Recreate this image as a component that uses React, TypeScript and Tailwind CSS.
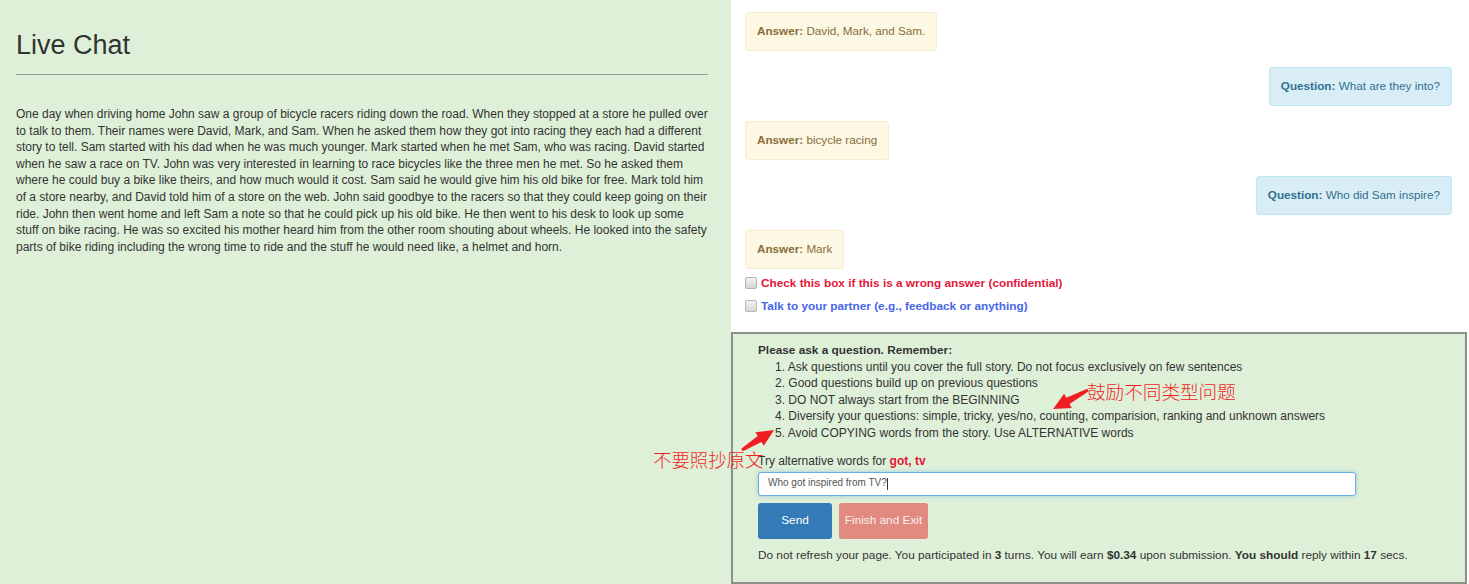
import React from "react";

const story =
  "One day when driving home John saw a group of bicycle racers riding down the road. When they stopped at a store he pulled over to talk to them. Their names were David, Mark, and Sam. When he asked them how they got into racing they each had a different story to tell. Sam started with his dad when he was much younger. Mark started when he met Sam, who was racing. David started when he saw a race on TV. John was very interested in learning to race bicycles like the three men he met. So he asked them where he could buy a bike like theirs, and how much would it cost. Sam said he would give him his old bike for free. Mark told him of a store nearby, and David told him of a store on the web. John said goodbye to the racers so that they could keep going on their ride. John then went home and left Sam a note so that he could pick up his old bike. He then went to his desk to look up some stuff on bike racing. He was so excited his mother heard him from the other room shouting about wheels. He looked into the safety parts of bike riding including the wrong time to ride and the stuff he would need like, a helmet and horn.";

const messages = [
  { kind: "answer", text: "David, Mark, and Sam." },
  { kind: "question", text: "What are they into?" },
  { kind: "answer", text: "bicycle racing" },
  { kind: "question", text: "Who did Sam inspire?" },
  { kind: "answer", text: "Mark" },
];

const rules = [
  "Ask questions until you cover the full story. Do not focus exclusively on few sentences",
  "Good questions build up on previous questions",
  "DO NOT always start from the BEGINNING",
  "Diversify your questions: simple, tricky, yes/no, counting, comparision, ranking and unknown answers",
  "Avoid COPYING words from the story. Use ALTERNATIVE words",
];

function Bubble({ kind, text }: { kind: string; text: string }) {
  if (kind === "question") {
    return (
      <div className="self-end h-[39px] flex items-center px-[11px] rounded-[3px] border border-[#bce8f1] bg-[#d9edf7] text-[#31708f] text-[11.7px]">
        <span>
          <b>Question:</b> {text}
        </span>
      </div>
    );
  }
  return (
    <div className="self-start h-[39px] flex items-center px-[11px] rounded-[3px] border border-[#faebcc] bg-[#fcf8e3] text-[#8a6d3b] text-[11.7px]">
      <span>
        <b>Answer:</b> {text}
      </span>
    </div>
  );
}

function CheckBox() {
  return (
    <span className="inline-block w-[12px] h-[12px] mr-[4px] rounded-[2px] border border-[#b4b4b4] bg-gradient-to-b from-[#f4f4f4] to-[#d6d6d6]" />
  );
}

// red hand-drawn style arrow, tail -> tip in page coords
function Arrow({ tx, ty, px, py }: { tx: number; ty: number; px: number; py: number }) {
  const dx = px - tx;
  const dy = py - ty;
  const len = Math.hypot(dx, dy);
  const ux = dx / len;
  const uy = dy / len;
  const nx = -uy;
  const ny = ux;
  const bx = px - ux * 17;
  const by = py - uy * 17;
  const pts = [
    [tx + nx * 1.5, ty + ny * 1.5],
    [bx + nx * 3.5, by + ny * 3.5],
    [bx + nx * 8, by + ny * 8],
    [px, py],
    [bx - nx * 8, by - ny * 8],
    [bx - nx * 3.5, by - ny * 3.5],
    [tx - nx * 1.5, ty - ny * 1.5],
  ]
    .map((p) => p.join(","))
    .join(" ");
  return <polygon points={pts} fill="#f01e23" />;
}

export default function App() {
  return (
    <div className="relative flex w-[1469px] h-[584px] overflow-hidden font-['Liberation_Sans',Arial,sans-serif] text-[12px] leading-[16.6px] text-[#333]">
      {/* story column */}
      <div className="w-[731px] shrink-0 bg-[#dff0d8] px-4">
        <h2 className="pt-[30px] text-[27px] leading-[30px] text-[#333]">Live Chat</h2>
        <hr className="mt-[14px] w-[692px] border-t border-[#9a9e9a]" />
        <p className="mt-[31px] w-[692px]">{story}</p>
      </div>

      {/* chat column */}
      <div className="flex-1 flex flex-col bg-white">
        <div className="flex-1 pl-[14px] pr-[17px] pt-[12px]">
          <div className="flex flex-col gap-[15.5px]">
            {messages.map((m, i) => (
              <Bubble key={i} kind={m.kind} text={m.text} />
            ))}
          </div>
          <div className="mt-[6px] flex flex-col gap-[6px] font-bold text-[11.8px]">
            <div className="flex items-center">
              <CheckBox />
              <span className="text-[#e3173a]">Check this box if this is a wrong answer (confidential)</span>
            </div>
            <div className="flex items-center">
              <CheckBox />
              <span className="text-[#4866e8]">Talk to your partner (e.g., feedback or anything)</span>
            </div>
          </div>
        </div>

        <div className="h-[252px] mr-[2px] border-2 border-[#8b908b] bg-[#dff0d8] pl-[25px] pt-[8px]">
          <div className="font-bold text-[11.8px]">Please ask a question. Remember:</div>
          <div className="pl-[17px]">
            {rules.map((r, i) => (
              <div key={i}>
                {i + 1}. {r}
              </div>
            ))}
          </div>
          <div className="mt-[11.5px]">
            Try alternative words for <b className="text-[#e3173a]">got, tv</b>
          </div>
          <div className="mt-[2px] w-[598px] h-[24px] flex items-center pl-[9px] rounded-[3px] border border-[#66afe9] bg-white shadow-[0_0_4px_rgba(102,175,233,0.6)] text-[10px] text-[#555]">
            Who got inspired from TV?
            <span className="inline-block w-px h-[12px] bg-[#333]" />
          </div>
          <div className="mt-[7px] flex gap-[7px] text-[11.8px]">
            <button className="w-[74px] h-[36px] rounded-[3px] bg-[#337ab7] text-white">Send</button>
            <button className="w-[89px] h-[36px] rounded-[3px] bg-[#e08a80] text-[#fbeeee]">Finish and Exit</button>
          </div>
          <div className="mt-[8px] text-[11.8px]">
            Do not refresh your page. You participated in <b>3</b> turns. You will earn <b>$0.34</b> upon submission.{" "}
            <b>You should</b> reply within <b>17</b> secs.
          </div>
        </div>
      </div>

      {/* annotations drawn over the screenshot */}
      <div className="absolute left-[1087px] top-[380px] text-[18.6px] leading-[22px] text-[#f01e23] font-['Noto_Sans_CJK_SC',sans-serif] font-light">
        鼓励不同类型问题
      </div>
      <div className="absolute left-[653px] top-[448px] text-[18.4px] leading-[22px] text-[#f01e23] font-['Noto_Sans_CJK_SC',sans-serif] font-light">
        不要照抄原文
      </div>
      <svg className="absolute left-0 top-0 pointer-events-none" width="1469" height="584">
        <Arrow tx={1088} ty={390} px={1053} py={409} />
        <Arrow tx={742} ty={450} px={774} py={430} />
      </svg>
    </div>
  );
}
